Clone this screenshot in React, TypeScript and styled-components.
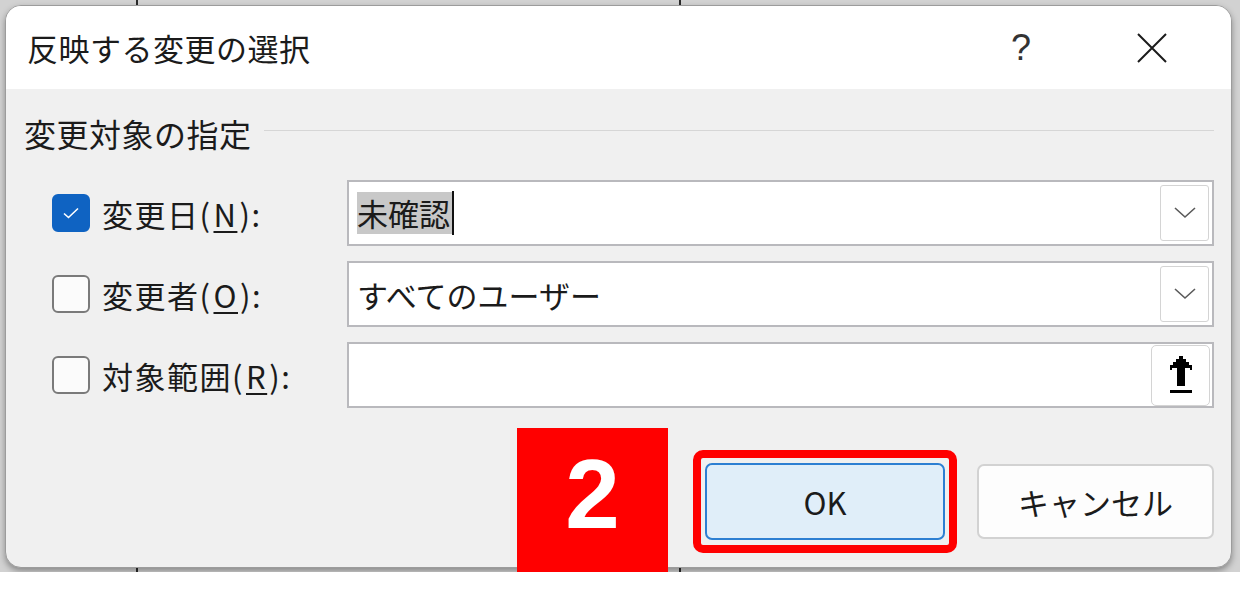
import React from 'react';
import styled, { createGlobalStyle } from 'styled-components';

const GlobalStyle = createGlobalStyle`
	html, body {
		margin: 0;
		padding: 0;
		background: #ffffff;
	}
	body {
		font-family: "Noto Sans CJK JP", "Noto Sans", sans-serif;
		color: #1b1b1b;
	}
`;

const Backdrop = styled.div`
	position: relative;
	height: 572px;
	box-sizing: border-box;
	padding: 5px 8px 4px 5px;
	background-color: #d2d2d2;
	background-image: linear-gradient(
			to right,
			transparent 136px,
			#2a2a2a 136px,
			#2a2a2a 138px,
			transparent 138px,
			transparent 679px,
			#2a2a2a 679px,
			#2a2a2a 681px,
			transparent 681px
		);
`;

const Dialog = styled.div`
	height: 100%;
	box-sizing: border-box;
	display: flex;
	flex-direction: column;
	border: 1px solid #9c9c9c;
	border-radius: 16px;
	overflow: hidden;
	background: #f0f0f0;
	box-shadow: 0 3px 6px rgba(0, 0, 0, 0.35);
`;

const TitleBar = styled.div`
	height: 83px;
	flex: none;
	display: flex;
	align-items: center;
	padding: 0 64px 0 21px;
	background: #ffffff;
`;

const Title = styled.div`
	flex: 1;
	font-size: 31px;
	letter-spacing: 0.5px;
`;

const HelpMark = styled.span`
	font-family: "Liberation Sans", Arial, sans-serif;
	font-size: 36px;
	color: #333333;
	margin-right: 106px;
`;

const CloseIcon = styled.svg`
	width: 30px;
	height: 30px;
	display: block;
`;

const Body = styled.div`
	flex: 1;
	display: flex;
	flex-direction: column;
	padding: 22px 17px 14px 18px;
`;

const GroupHeader = styled.div`
	display: flex;
	align-items: center;
	gap: 12px;
	height: 44px;
	font-size: 32px;
	letter-spacing: 0.5px;
`;

const GroupRule = styled.div`
	flex: 1;
	height: 1px;
	margin-top: -6px;
	background: #d6d6d6;
`;

const Rows = styled.div`
	display: flex;
	flex-direction: column;
	gap: 15px;
	margin-top: 25px;
	padding-left: 28px;
`;

const Row = styled.div`
	display: flex;
	align-items: center;
	height: 66px;
`;

const LabelCell = styled.label`
	width: 295px;
	flex: none;
	display: flex;
	align-items: center;
	gap: 12px;
	font-size: 31px;
`;

const LabelText = styled.span`
	letter-spacing: 1.5px;
`;

const CheckBox = styled.span<{ checked: boolean }>`
	width: 38px;
	height: 38px;
	box-sizing: border-box;
	flex: none;
	display: flex;
	align-items: center;
	justify-content: center;
	border-radius: 6px;
	border: 2px solid ${({ checked }) => (checked ? '#0f63c2' : '#7a7a7a')};
	background: ${({ checked }) => (checked ? '#0f63c2' : '#fbfbfb')};
`;

const Mnemonic = styled.span`
	text-decoration: underline;
	text-underline-offset: 4px;
	text-decoration-thickness: 2px;
	padding: 0 2px;
`;

const Field = styled.div`
	flex: 1;
	height: 100%;
	box-sizing: border-box;
	display: flex;
	align-items: center;
	padding: 0 3px 0 8px;
	border: 2px solid #b9b9bd;
	background: #ffffff;
	font-size: 31px;
`;

const FieldValue = styled.div`
	flex: 1;
	display: flex;
	align-items: center;
`;

const Selected = styled.span`
	background: #c8c8c8;
	line-height: 42px;
	padding-right: 2px;
`;

const Caret = styled.span`
	width: 2px;
	height: 44px;
	background: #111111;
`;

const DropButton = styled.div`
	width: 49px;
	height: 56px;
	box-sizing: border-box;
	display: flex;
	align-items: center;
	justify-content: center;
	border: 1px solid #d4d4d4;
	border-radius: 3px;
	background: #ffffff;
`;

const RefButton = styled(DropButton)`
	width: 59px;
	height: 61px;
	border-radius: 5px;
	margin-right: -1px;
`;

const ButtonRow = styled.div`
	margin-top: auto;
	display: flex;
	justify-content: flex-end;
	align-items: center;
	gap: 20px;
`;

const Highlight = styled.div`
	width: 264px;
	height: 103px;
	box-sizing: border-box;
	padding: 5px 4px;
	border: 8px solid #ff0000;
	border-radius: 10px;
	display: flex;
`;

const Button = styled.button<{ primary?: boolean }>`
	width: ${({ primary }) => (primary ? '100%' : '237px')};
	height: ${({ primary }) => (primary ? '100%' : '75px')};
	box-sizing: border-box;
	border-radius: 7px;
	border: 2px solid ${({ primary }) => (primary ? '#2d7fd2' : '#d2d2d2')};
	background: ${({ primary }) => (primary ? '#e0eef9' : '#fdfdfd')};
	font-family: "Noto Sans CJK JP", "Noto Sans", sans-serif;
	font-size: 31px;
	color: #1b1b1b;
	padding: 0;
`;

const StepBadge = styled.div`
	position: absolute;
	left: 517px;
	top: 428px;
	width: 151px;
	height: 144px;
	box-sizing: border-box;
	padding-bottom: 12px;
	display: flex;
	align-items: center;
	justify-content: center;
	background: #ff0000;
	color: #ffffff;
	font-family: "Liberation Sans", Arial, sans-serif;
	font-weight: 700;
	font-size: 98px;
	line-height: 1;
`;

function Chevron() {
	return (
		<svg width="24" height="14" viewBox="0 0 24 14">
			<path d="M2 2 L12 11 L22 2" fill="none" stroke="#5a5a5a" strokeWidth="1.6" />
		</svg>
	);
}

function RefIcon() {
	return (
		<svg width="26" height="38" viewBox="0 0 26 38" shapeRendering="crispEdges">
			<path
				d="M11 0 L15 0 L15 3 L18 3 L18 6 L21 6 L21 9 L24 9 L24 14 L22 14 L22 12 L17 12 L17 30 L9 30 L9 12 L4 12 L4 14 L2 14 L2 9 L5 9 L5 6 L8 6 L8 3 L11 3 Z"
				fill="#000000"
			/>
			<rect x="2" y="34" width="22" height="3" fill="#000000" />
		</svg>
	);
}

function Check({ checked }: { checked: boolean }) {
	return (
		<CheckBox checked={checked}>
			{checked ? (
				<svg width="20" height="16" viewBox="0 0 20 16">
					<path d="M3 8.5 L7.5 12.5 L17 3.5" fill="none" stroke="#ffffff" strokeWidth="1.6" />
				</svg>
			) : null}
		</CheckBox>
	);
}

export default function App() {
	return (
		<>
			<GlobalStyle />
			<Backdrop>
				<Dialog>
					<TitleBar>
						<Title>反映する変更の選択</Title>
						<HelpMark>?</HelpMark>
						<CloseIcon viewBox="0 0 30 30">
							<path d="M1 1 L29 29 M29 1 L1 29" stroke="#1b1b1b" strokeWidth="2" />
						</CloseIcon>
					</TitleBar>

					<Body>
						<GroupHeader>
							<span>変更対象の指定</span>
							<GroupRule />
						</GroupHeader>

						<Rows>
							<Row>
								<LabelCell>
									<Check checked />
									<LabelText>
										変更日(<Mnemonic>N</Mnemonic>):
									</LabelText>
								</LabelCell>
								<Field>
									<FieldValue>
										<Selected>未確認</Selected>
										<Caret />
									</FieldValue>
									<DropButton>
										<Chevron />
									</DropButton>
								</Field>
							</Row>

							<Row>
								<LabelCell>
									<Check checked={false} />
									<LabelText>
										変更者(<Mnemonic>O</Mnemonic>):
									</LabelText>
								</LabelCell>
								<Field>
									<FieldValue>すべてのユーザー</FieldValue>
									<DropButton>
										<Chevron />
									</DropButton>
								</Field>
							</Row>

							<Row>
								<LabelCell>
									<Check checked={false} />
									<LabelText>
										対象範囲(<Mnemonic>R</Mnemonic>):
									</LabelText>
								</LabelCell>
								<Field>
									<FieldValue />
									<RefButton>
										<RefIcon />
									</RefButton>
								</Field>
							</Row>
						</Rows>

						<ButtonRow>
							<Highlight>
								<Button primary type="button">
									OK
								</Button>
							</Highlight>
							<Button type="button">キャンセル</Button>
						</ButtonRow>
					</Body>
				</Dialog>
				<StepBadge>2</StepBadge>
			</Backdrop>
		</>
	);
}
